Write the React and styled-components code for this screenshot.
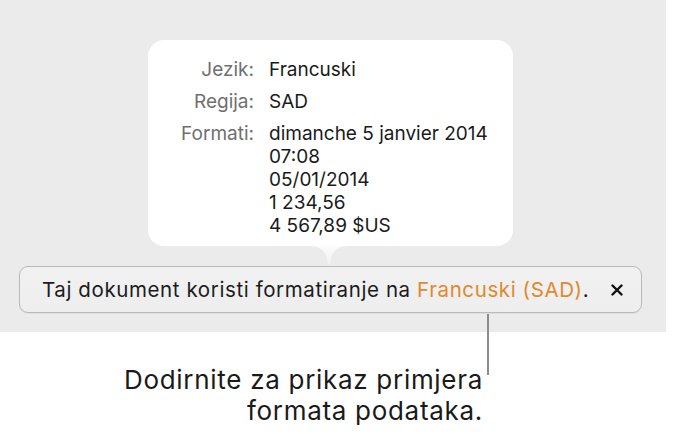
import React from "react";
import styled, { createGlobalStyle } from "styled-components";

const Global = createGlobalStyle`
  html, body { margin: 0; padding: 0; background: #ffffff; }
  body { font-family: Inter, "Noto Sans", sans-serif; -webkit-font-smoothing: antialiased; }
`;

const Page = styled.div`
  width: 700px;
  height: 434px;
  position: relative;
  overflow: hidden;
`;

const Panel = styled.div`
  width: 666px;
  height: 332px;
  background: #ebebeb;
  box-sizing: border-box;
  padding: 40px 24px 0 19px;
  display: flex;
  flex-direction: column;
  align-items: center;
`;

const Popover = styled.div`
  position: relative;
  width: 365px;
  height: 206px;
  box-sizing: border-box;
  background: #ffffff;
  border-radius: 16px;
  padding: 18px 20px 10px 32px;
  display: grid;
  grid-template-columns: 74px 1fr;
  column-gap: 15px;
  row-gap: 9px;
  align-content: start;
  &::after {
    content: "";
    position: absolute;
    left: 161px;
    bottom: -20px;
    width: 40px;
    height: 20px;
    background: linear-gradient(#fbfbfb, #f1f1f1);
    clip-path: path("M0 0 C10 0 14 4 17 9 L20 20 L23 9 C26 4 30 0 40 0 Z");
  }
`;

const Label = styled.div`
  text-align: right;
  color: #6f6f6f;
  font-size: 19px;
  line-height: 23px;
  white-space: nowrap;
`;

const Value = styled.div`
  color: #1a1a1a;
  font-size: 19px;
  line-height: 23px;
  white-space: nowrap;
`;

const Bar = styled.div`
  margin-top: 20px;
  width: 623px;
  height: 47px;
  box-sizing: border-box;
  border: 1px solid #b9b9b9;
  border-radius: 9px;
  background: linear-gradient(#f1f1f1, #eeeeee);
  box-shadow: 0 1px 0 rgba(0,0,0,0.05);
  display: flex;
  align-items: center;
  padding: 0 18px 0 22px;
  justify-content: space-between;
  align-self: flex-start;
`;

const Message = styled.div`
  font-size: 20.5px;
  color: #1c1c1c;
  white-space: nowrap;
  letter-spacing: 0.6px;
`;

const Accent = styled.span`
  color: #e0892e;
`;

const Close = styled.span`
  display: flex;
  width: 12px;
  height: 12px;
  align-items: center;
  justify-content: center;
`;

const CalloutArea = styled.div`
  position: relative;
  width: 482px;
  padding-top: 32px;
  display: flex;
  justify-content: flex-end;
`;

const Leader = styled.div`
  position: absolute;
  left: 487px;
  top: -18px;
  width: 2px;
  height: 61px;
  background: #8c8c8c;
`;

const Caption = styled.div`
  font-size: 26px;
  line-height: 31px;
  letter-spacing: 0.7px;
  color: #1a1a1a;
  text-align: right;
  white-space: nowrap;
  margin-right: -1px;
`;

export default function App() {
  return (
    <Page>
      <Global />
      <Panel>
        <Popover>
          <Label>Jezik:</Label>
          <Value>Francuski</Value>
          <Label>Regija:</Label>
          <Value>SAD</Value>
          <Label>Formati:</Label>
          <Value>
            dimanche 5 janvier 2014
            <br />07:08
            <br />05/01/2014
            <br />1 234,56
            <br />4 567,89 $US
          </Value>
        </Popover>
        <Bar>
          <Message>
            Taj dokument koristi formatiranje na <Accent>Francuski (SAD)</Accent>.
          </Message>
          <Close>
            <svg width="12" height="12" viewBox="0 0 12 12">
              <path d="M1.5 1.5 L10.5 10.5 M10.5 1.5 L1.5 10.5" stroke="#111" strokeWidth="2.4" strokeLinecap="round" />
            </svg>
          </Close>
        </Bar>
      </Panel>
      <CalloutArea>
        <Leader />
        <Caption>
          Dodirnite za prikaz primjera
          <br />formata podataka.
        </Caption>
      </CalloutArea>
    </Page>
  );
}
